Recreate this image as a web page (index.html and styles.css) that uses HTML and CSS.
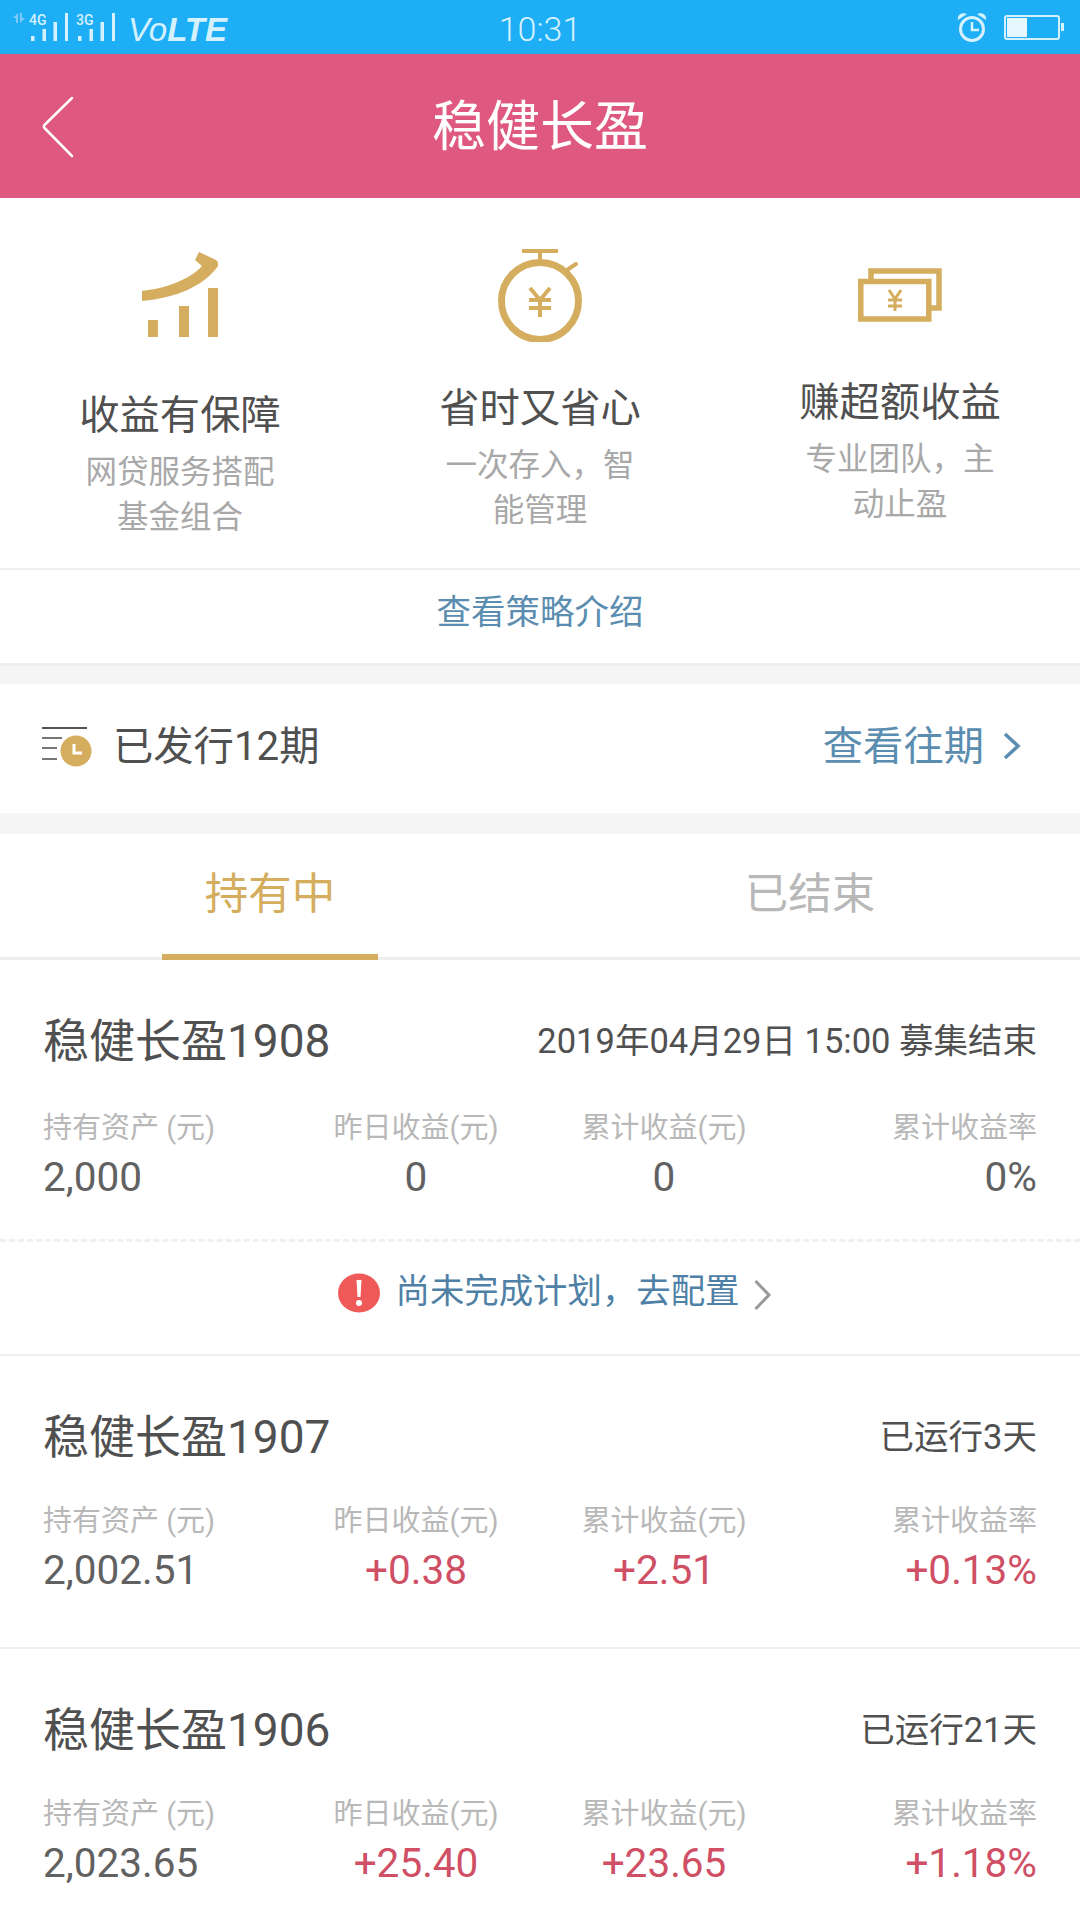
FILE: index.html
```html
<!DOCTYPE html>
<html lang="zh-CN">
<head>
  <meta charset="UTF-8">
  <meta name="viewport" content="width=device-width, initial-scale=1.0">
  <title>稳健长盈</title>
  <link rel="stylesheet" href="styles.css">
</head>
<body>
  <div class="status-bar">
    <div class="status-left">
      <svg class="sig-arrows" width="12" height="10" viewBox="0 0 12 10"><path d="M5 0v10H3V5H0zM7 10V0h2v5h3z" fill="#7ccdf9"/></svg>
      <div class="sig">
        <span class="sig-label">4G</span>
        <svg width="40" height="28" viewBox="0 0 40 28"><path d="M2 23h3.500v5H2zM13.500 16H17v12h-3.500zM24.500 9H28v19h-3.500zM36 0h3v28h-3z" fill="#d5f1fe"/></svg>
      </div>
      <div class="sig">
        <span class="sig-label">3G</span>
        <svg width="40" height="28" viewBox="0 0 40 28"><path d="M2 23h3.500v5H2zM13.500 16H17v12h-3.500zM24.500 9H28v19h-3.500zM36 0h3v28h-3z" fill="#d5f1fe"/></svg>
      </div>
      <span class="volte">Vo<b>LTE</b></span>
    </div>
    <div class="status-time">10:31</div>
    <div class="status-right">
      <svg width="30" height="30" viewBox="0 0 30 30" fill="none" stroke="#d5f1fe"><circle cx="15" cy="17" r="11.500" stroke-width="3"/><path d="M15 10v8h7" stroke-width="2.500"/><path d="M1 8C0 3 5 0 10 2zM29 8c1-5-4-8-9-6z" fill="#d5f1fe" stroke="none"/></svg>
      <div class="battery"><div class="battery-fill"></div></div>
      <div class="battery-tip"></div>
    </div>
  </div>

  <header class="nav">
    <svg class="nav-back" width="32" height="62" viewBox="0 0 32 62" fill="none"><path d="M30 2L2.500 29a2 2 0 0 0 0 3L30 60" stroke="#fff" stroke-width="2.500" stroke-linecap="round"/></svg>
    <h1 class="nav-title">稳健长盈</h1>
  </header>

  <section class="features">
    <div class="feature">
      <svg class="feature-icon icon-a" width="76" height="85" viewBox="0 0 76 85" fill="#d4ad5e">
        <path d="M57 0l17 8q3 2 2 6C62 34 34 46 0 49V39c26-3 48-12 60-25l-7-6z"/>
        <path d="M6 68h10v17H6zM37 54h10v31H37zM66 36h10v49H66z"/>
      </svg>
      <div class="feature-name">收益有保障</div>
      <div class="feature-desc">网贷服务搭配<br>基金组合</div>
    </div>
    <div class="feature">
      <svg class="feature-icon icon-b" width="86" height="94" viewBox="0 0 86 94" fill="none" stroke="#d4ad5e">
        <circle cx="43" cy="53" r="38.500" stroke-width="7"/>
        <path d="M25 3h36M43 3v12" stroke-width="4"/>
        <path d="M70 22l9-6" stroke-width="4" stroke-linecap="round"/>
        <path d="M33 40l10 12 10-12M43 52v17M32 52h22M32 60h22" stroke-width="4"/>
      </svg>
      <div class="feature-name">省时又省心</div>
      <div class="feature-desc">一次存入，智<br>能管理</div>
    </div>
    <div class="feature">
      <svg class="feature-icon icon-c" width="84" height="54" viewBox="0 0 84 54" fill="none" stroke="#d4ad5e" stroke-width="5.500">
        <path d="M13 11V3h68v37H72"/>
        <rect x="2.800" y="13.500" width="68" height="37.500"/>
        <path d="M31 22l6 9 6-9M37 31v12M30 32h14M30 38h14" stroke-width="3"/>
      </svg>
      <div class="feature-name">赚超额收益</div>
      <div class="feature-desc">专业团队，主<br>动止盈</div>
    </div>
  </section>

  <div class="strategy-link">查看策略介绍</div>

  <div class="issue-row">
    <div class="issue-left">
      <svg class="issue-icon" width="50" height="40" viewBox="0 0 50 40">
        <path d="M0 0h45v2H0z" fill="#555"/>
        <path d="M0 10h20v2H0zM0 20h15v2H0zM0 31h15v2H0z" fill="#777"/>
        <circle cx="34" cy="24" r="15.500" fill="#d4ad5e"/>
        <path d="M32 17v9h8" fill="none" stroke="#fff" stroke-width="3"/>
      </svg>
      <span class="issue-text">已发行12期</span>
    </div>
    <div class="issue-right">
      <span class="issue-more">查看往期</span>
      <svg class="issue-arrow" width="20" height="30" viewBox="0 0 20 30" fill="none"><path d="M3 3l13 12L3 27" stroke="#5b8db0" stroke-width="3.500"/></svg>
    </div>
  </div>

  <div class="tabs">
    <div class="tab tab-active">持有中</div>
    <div class="tab">已结束</div>
  </div>

  <section class="card card-first">
    <div class="card-head">
      <span class="card-title">稳健长盈1908</span>
      <span class="card-note">2019年04月29日 15:00 募集结束</span>
    </div>
    <div class="stats">
      <span class="stat-label">持有资产 (元)</span>
      <span class="stat-label stat-mid">昨日收益(元)</span>
      <span class="stat-label stat-mid">累计收益(元)</span>
      <span class="stat-label stat-end">累计收益率</span>
      <span class="stat-value">2,000</span>
      <span class="stat-value stat-mid">0</span>
      <span class="stat-value stat-mid">0</span>
      <span class="stat-value stat-end">0%</span>
    </div>
  </section>
  <div class="notice">
    <svg width="42" height="40" viewBox="0 0 42 40"><ellipse cx="21" cy="20" rx="21" ry="19.500" fill="#ef5a58"/><path d="M18.500 7h5l-1 17h-3z" fill="#fff"/><circle cx="21" cy="30" r="3" fill="#fff"/></svg>
    <span class="notice-text">尚未完成计划，去配置</span>
    <svg class="notice-arrow" width="17" height="30" viewBox="0 0 17 30" fill="none"><path d="M1.500 1L15 15 1.500 29" stroke="#999" stroke-width="3"/></svg>
  </div>

  <section class="card">
    <div class="card-head">
      <span class="card-title">稳健长盈1907</span>
      <span class="card-note">已运行3天</span>
    </div>
    <div class="stats">
      <span class="stat-label">持有资产 (元)</span>
      <span class="stat-label stat-mid">昨日收益(元)</span>
      <span class="stat-label stat-mid">累计收益(元)</span>
      <span class="stat-label stat-end">累计收益率</span>
      <span class="stat-value">2,002.51</span>
      <span class="stat-value stat-mid up">+0.38</span>
      <span class="stat-value stat-mid up">+2.51</span>
      <span class="stat-value stat-end up">+0.13%</span>
    </div>
  </section>

  <section class="card">
    <div class="card-head">
      <span class="card-title">稳健长盈1906</span>
      <span class="card-note">已运行21天</span>
    </div>
    <div class="stats">
      <span class="stat-label">持有资产 (元)</span>
      <span class="stat-label stat-mid">昨日收益(元)</span>
      <span class="stat-label stat-mid">累计收益(元)</span>
      <span class="stat-label stat-end">累计收益率</span>
      <span class="stat-value">2,023.65</span>
      <span class="stat-value stat-mid up">+25.40</span>
      <span class="stat-value stat-mid up">+23.65</span>
      <span class="stat-value stat-end up">+1.18%</span>
    </div>
  </section>
</body>
</html>
```

FILE: styles.css
```css
body {
  margin: 0;
  height: 1920px;
  overflow: hidden;
  background-color: #f5f5f5;
  font-family: Roboto, "Noto Sans CJK SC", sans-serif;
  color: #4a4a4a;
}

/* status bar */
.status-bar {
  height: 54px;
  display: grid;
  grid-template-columns: 1fr auto 1fr;
  align-items: center;
  background-color: #1daef6;
  color: #d5f1fe;
}
.status-left {
  display: flex;
  align-items: flex-start;
  height: 54px;
  padding: 13px 0 0 13px;
  box-sizing: border-box;
}
.sig-arrows {
  margin-right: 4px;
}
.sig {
  position: relative;
  width: 47px;
  height: 28px;
}
.sig svg {
  display: block;
}
.sig-label {
  position: absolute;
  left: 0;
  top: 0;
  font-size: 14px;
  font-weight: 500;
  line-height: 14px;
}
.volte {
  margin: 2px 0 0 5px;
  font-family: "Liberation Sans", sans-serif;
  font-size: 33px;
  font-style: italic;
  line-height: 30px;
}
.status-time {
  margin-top: 3px;
  font-size: 34px;
  font-weight: 300;
}
.status-right {
  display: flex;
  align-items: center;
  justify-content: flex-end;
  padding-right: 16px;
}
.battery {
  width: 50px;
  height: 19px;
  margin-left: 17px;
  padding: 1px;
  border: 2px solid #d5f1fe;
  border-radius: 3px;
}
.battery-fill {
  width: 20px;
  height: 100%;
  background-color: #e6f7ff;
}
.battery-tip {
  width: 3px;
  height: 8px;
  margin-left: 1px;
  background-color: #d5f1fe;
}

/* nav */
.nav {
  position: relative;
  height: 144px;
  display: flex;
  align-items: center;
  justify-content: center;
  padding-bottom: 8px;
  box-sizing: border-box;
  background-color: #de5880;
}
.nav-back {
  position: absolute;
  left: 42px;
  top: 42px;
}
.nav-title {
  margin: 0;
  font-size: 54px;
  font-weight: 400;
  color: #fff;
}

/* features */
.features {
  height: 372px;
  display: grid;
  grid-template-columns: repeat(3, 1fr);
  box-sizing: border-box;
  border-bottom: 2px solid #eee;
  background-color: #fff;
}
.feature {
  display: flex;
  flex-direction: column;
  align-items: center;
  padding-top: 54px;
}
.feature-icon {
  display: block;
}
.icon-a {
  margin-bottom: 52px;
}
.icon-b {
  margin-top: -4px;
  margin-bottom: 40px;
}
.icon-c {
  margin-top: 16px;
  margin-bottom: 54px;
}
.feature-name {
  font-size: 40.300px;
  line-height: 54px;
  color: #505050;
}
.feature-desc {
  margin-top: 7px;
  font-size: 31.500px;
  line-height: 45px;
  text-align: center;
  color: #a8a8a8;
}

.strategy-link {
  height: 96px;
  line-height: 84px;
  text-align: center;
  font-size: 34.500px;
  color: #5b8db0;
  box-sizing: border-box;
  border-bottom: 3px solid #eee;
  background-color: #fff;
}

.issue-row {
  height: 129px;
  display: flex;
  align-items: center;
  justify-content: space-between;
  margin-top: 18px;
  padding: 0 58px 8px 42px;
  box-sizing: border-box;
  background-color: #fff;
}
.issue-left {
  display: flex;
  align-items: center;
  gap: 21px;
}
.issue-icon {
  margin-top: 5px;
}
.issue-text {
  margin-bottom: 4px;
  font-size: 40.300px;
  color: #505050;
}
.issue-right {
  display: flex;
  align-items: center;
  gap: 18px;
}
.issue-more {
  margin-bottom: 4px;
  font-size: 40.300px;
  color: #5b8db0;
}
.issue-arrow {
  margin-top: 2px;
}

/* tabs */
.tabs {
  height: 126px;
  margin-top: 21px;
  display: grid;
  grid-template-columns: 1fr 1fr;
  box-sizing: border-box;
  border-bottom: 3px solid #eee;
  background-color: #fff;
}
.tab {
  width: 216px;
  height: 126px;
  justify-self: center;
  line-height: 121px;
  text-align: center;
  font-size: 43.500px;
  color: #b8b8b8;
  box-sizing: border-box;
}
.tab-active {
  color: #d4ad5e;
  border-bottom: 6px solid #d4ad5e;
}

/* cards */
.card {
  height: 293px;
  padding: 0 43px;
  box-sizing: border-box;
  border-bottom: 2px solid #eee;
  background-color: #fff;
}
.card-first {
  height: 282px;
  border-bottom: 3px dashed #f0f0f0;
}
.card-head {
  display: flex;
  align-items: center;
  justify-content: space-between;
  height: 64px;
  padding-top: 45px;
}
.card-title {
  font-size: 46px;
  color: #505050;
}
.card-note {
  margin-top: 2px;
  font-size: 34.500px;
  color: #505050;
}
.stats {
  display: grid;
  grid-template-columns: 251px 244px 252px 1fr;
  margin-top: 34px;
}
.card-first .stats {
  margin-top: 37px;
}
.stat-label {
  font-size: 29px;
  line-height: 44px;
  color: #b8b8b8;
}
.stat-value {
  font-size: 40.500px;
  line-height: 54px;
  color: #616161;
}
.stat-mid {
  text-align: center;
}
.stat-end {
  text-align: right;
}
.stat-value.up {
  color: #cf4f65;
}

.notice {
  height: 114px;
  display: flex;
  align-items: center;
  justify-content: center;
  padding: 0 0 11px 29px;
  box-sizing: border-box;
  border-bottom: 2px solid #eee;
  background-color: #fff;
}
.notice-text {
  margin: 0 15px 9px 16px;
  font-size: 34.400px;
  color: #4f80a6;
}
.notice-arrow {
  margin-top: 4px;
}
```
